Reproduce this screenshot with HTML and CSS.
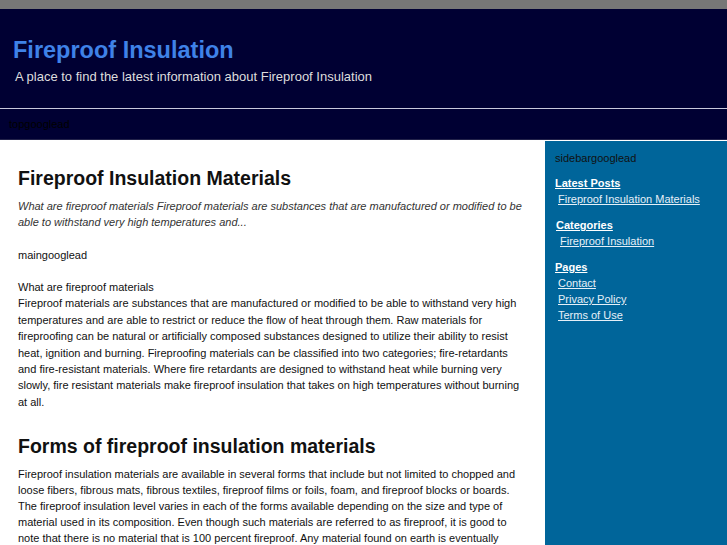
FILE: index.html
```html
<!DOCTYPE html>
<html>
<head>
<meta charset="utf-8">
<link rel="stylesheet" href="styles.css">
</head>
<body>
<div class="topbar"></div>
<div class="header">
  <div class="site-title">Fireproof Insulation</div>
  <div class="tagline">A place to find the latest information about Fireproof Insulation</div>
</div>
<div class="nav">topgooglead</div>
<div class="wrap">
  <div class="main">
    <h1>Fireproof Insulation Materials</h1>
    <p class="excerpt">What are fireproof materials Fireproof materials are substances that are manufactured or modified to be able to withstand very high temperatures and...</p>
    <p>maingooglead</p>
    <p class="body1">What are fireproof materials<br>Fireproof materials are substances that are manufactured or modified to be able to withstand very high temperatures and are able to restrict or reduce the flow of heat through them. Raw materials for fireproofing can be natural or artificially composed substances designed to utilize their ability to resist heat, ignition and burning. Fireproofing materials can be classified into two categories; fire-retardants and fire-resistant materials. Where fire retardants are designed to withstand heat while burning very slowly, fire resistant materials make fireproof insulation that takes on high temperatures without burning at all.</p>
    <h2>Forms of fireproof insulation materials</h2>
    <p>Fireproof insulation materials are available in several forms that include but not limited to chopped and loose fibers, fibrous mats, fibrous textiles, fireproof films or foils, foam, and fireproof blocks or boards. The fireproof insulation level varies in each of the forms available depending on the size and type of material used in its composition. Even though such materials are referred to as fireproof, it is good to note that there is no material that is 100 percent fireproof. Any material found on earth is eventually destroyed by fire at some point.</p>
  </div>
  <div class="sidebar">
    <div class="ad">sidebargooglead</div>
    <div class="widget">
      <a class="wtitle" href="#">Latest Posts</a>
      <ul><li><a href="#">Fireproof Insulation Materials</a></li></ul>
    </div>
    <div class="widget w2">
      <a class="wtitle" href="#">Categories</a>
      <ul><li><a href="#">Fireproof Insulation</a></li></ul>
    </div>
    <div class="widget">
      <a class="wtitle" href="#">Pages</a>
      <ul>
        <li><a href="#">Contact</a></li>
        <li><a href="#">Privacy Policy</a></li>
        <li><a href="#">Terms of Use</a></li>
      </ul>
    </div>
  </div>
</div>
</body>
</html>
```
FILE: styles.css
```css
html, body { margin: 0; padding: 0; }
body {
  font-family: "Liberation Sans", Arial, sans-serif;
  font-size: 11px;
  line-height: 16px;
  color: #111;
  background: #fff;
}
.topbar { height: 9px; background: #777; }
.header {
  height: 100px;
  background: #000033;
  padding: 0 13px;
  box-sizing: border-box;
  padding-top: 27px;
  border-bottom: 1px solid #c8c8dc;
}
.site-title {
  color: #3f82e8;
  font-size: 23.5px;
  font-weight: bold;
  line-height: 28px;
}
.tagline {
  color: #ddd;
  font-size: 13px;
  line-height: 16px;
  margin-top: 5px;
  padding-left: 2px;
}
.nav {
  background: #000033;
  color: #000;
  padding-left: 9px;
  line-height: 30px;
  border-bottom: 1px solid #22224a;
  box-sizing: border-box;
  height: 31px;
}
.wrap { display: flex; }
.main {
  width: 545px;
  box-sizing: border-box;
  padding: 17px 20px 0 18px;
}
.main h1 {
  font-size: 19.5px;
  line-height: 24px;
  margin: 9px 0 8px;
}
.main h2 {
  font-size: 19.5px;
  line-height: 24px;
  margin: 24px 0 8px;
}
.main p { margin: 0 0 16px; }
.excerpt { font-style: italic; color: #333; margin-bottom: 17px !important; }
.body1 { line-height: 16.4px; }
.sidebar {
  flex: 1;
  margin-top: 1px;
  background: #00659a;
  padding: 9px 0 0 10px;
  min-height: 420px;
}
.ad { color: #111; margin-bottom: 9px; }
.widget { margin-bottom: 10px; }
.widget a { color: #e6f0f8; }
.wtitle { font-weight: bold; color: #fff !important; }
.widget ul { list-style: none; margin: 0; padding: 0 0 0 3px; }
.w2 { padding-left: 1px; }
.w2 ul { padding-left: 4px; }
```
